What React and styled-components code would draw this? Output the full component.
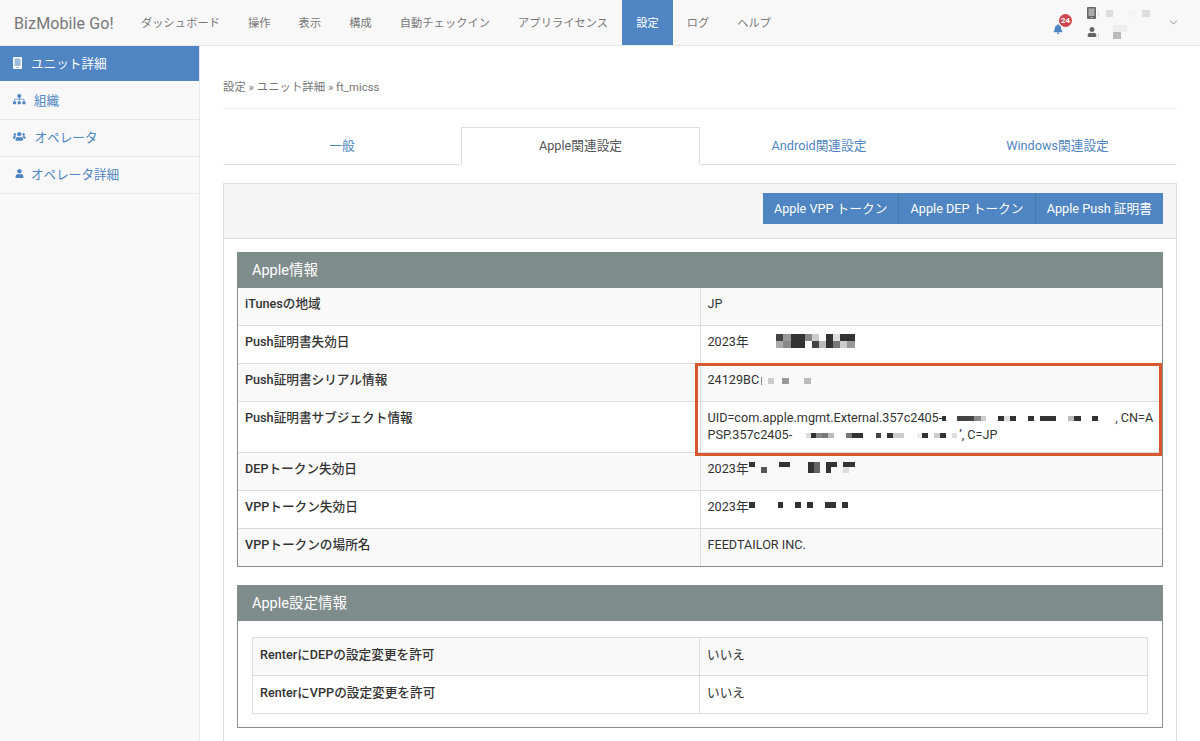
import styled, { createGlobalStyle } from "styled-components";
import { FaBell, FaSitemap, FaUser, FaUsers } from "react-icons/fa";
import { ChevronDown } from "lucide-react";

const Global = createGlobalStyle`
  html, body { margin: 0; padding: 0; background: #fff; }
  body {
    font-family: Roboto, "Noto Sans CJK JP", "Liberation Sans", sans-serif;
    font-size: 13px;
    color: #333;
  }
  * { box-sizing: border-box; }
`;

const Page = styled.div`
  width: 1200px;
  height: 741px;
  overflow: hidden;
  display: flex;
  flex-direction: column;
`;

const Navbar = styled.header`
  height: 46px;
  flex: none;
  display: flex;
  align-items: stretch;
  background: #f8f8f8;
  border-bottom: 1px solid #e7e7e7;
`;

const Brand = styled.div`
  width: 127px;
  padding-left: 14px;
  font-size: 16px;
  line-height: 47px;
  color: #777;
  letter-spacing: 0.12px;
`;

const NavItem = styled.div`
  padding: 0 14px;
  line-height: 47px;
  font-size: 11.2px;
  letter-spacing: 0.1px;
  color: ${(p) => (p.$active ? "#fff" : "#777")};
  background: ${(p) => (p.$active ? "#4f85c2" : "transparent")};
`;

const NavRight = styled.div`
  margin-left: auto;
  display: flex;
  align-items: center;
  padding-right: 20px;
`;

const Bell = styled.div`
  position: relative;
  width: 34px;
  height: 20px;
  margin-top: 3px;
  color: #4f85c2;
  display: flex;
  align-items: flex-end;
`;

const Badge = styled.span`
  position: absolute;
  left: 6px;
  top: 0;
  width: 13px;
  height: 13px;
  border-radius: 50%;
  background: #d0454f;
  color: #fff;
  font-size: 8px;
  font-weight: 700;
  line-height: 13px;
  text-align: center;
`;

const UserBox = styled.div`
  width: 80px;
  display: flex;
  flex-direction: column;
  gap: 5px;
  color: #666;
`;

const UserRow = styled.div`
  display: flex;
  align-items: center;
  height: ${(p) => p.$h}px;
`;

const Body = styled.div`
  flex: 1;
  display: flex;
  min-height: 0;
`;

const Sidebar = styled.aside`
  width: 200px;
  flex: none;
  background: #f8f8f8;
  border-right: 1px solid #e7e7e7;
`;

const SideItem = styled.div`
  height: ${(p) => (p.$active ? "35px" : "37px")};
  margin-bottom: ${(p) => (p.$active ? "2px" : "0")};
  display: flex;
  align-items: center;
  gap: ${(p) => p.$gap}px;
  padding: 0 0 ${(p) => (p.$active ? "2px" : "4px")} ${(p) => p.$pad || 13}px;
  font-size: 12.6px;
  color: ${(p) => (p.$active ? "#fff" : "#4f85c2")};
  background: ${(p) => (p.$active ? "#4f85c2" : "transparent")};
  border-bottom: ${(p) => (p.$active ? "none" : "1px solid #e7e7e7")};
  svg { flex: none; }
`;

const Main = styled.main`
  flex: 1;
  padding: 0 23px;
  min-width: 0;
`;

const Breadcrumb = styled.div`
  height: 63px;
  padding-top: 34px;
  line-height: 15px;
  font-size: 11.4px;
  color: #777;
  border-bottom: 1px solid #eee;
`;

const Tabs = styled.nav`
  margin-top: 18px;
  height: 38px;
  display: grid;
  grid-template-columns: 238px 239px 238px 239px;
`;

const Tab = styled.div`
  text-align: center;
  font-size: 12.7px;
  line-height: 36px;
  color: ${(p) => (p.$active ? "#555" : "#4f85c2")};
  border: 1px solid ${(p) => (p.$active ? "#ddd" : "transparent")};
  border-bottom: 1px solid ${(p) => (p.$active ? "#fff" : "#ddd")};
`;

const Panel = styled.section`
  margin-top: 18px;
  border: 1px solid #ddd;
  border-bottom: none;
  padding-bottom: 14px;
`;

const PanelTools = styled.div`
  height: 55px;
  display: flex;
  justify-content: flex-end;
  align-items: flex-start;
  padding: 9px 13px 0 0;
  background: #f5f5f5;
  border-bottom: 1px solid #ddd;
`;

const ToolButton = styled.button`
  height: 31px;
  padding: 0 11.1px 2px;
  font: inherit;
  font-size: 12.7px;
  color: #fff;
  background: #4f85c2;
  border: none;
  border-left: 1px solid #4577b0;
  white-space: nowrap;
  &:first-child { border-left: none; }
`;

const Section = styled.div`
  margin: ${(p) => (p.$first ? "13px" : "18px")} 13px 0 13px;
  border: 1px solid #888f8f;
  border-top: none;
  position: relative;
`;

const SectionTitle = styled.h3`
  margin: 0 -1px;
  height: 36px;
  padding-left: 15px;
  font-size: 14.5px;
  font-weight: 400;
  line-height: 37px;
  color: #fff;
  background: #7f8c8c;
`;

const Table = styled.table`
  width: 100%;
  border-collapse: collapse;
  table-layout: fixed;
  font-size: 12.65px;
`;

const Row = styled.tr`
  height: ${(p) => p.$h || 38}px;
  background: ${(p) => (p.$odd ? "#f9f9f9" : "#fff")};
  & + & { border-top: 1px solid #ddd; }
`;

const Th = styled.th`
  width: ${(p) => p.$w}px;
  padding: 7px 7px 9px;
  vertical-align: top;
  text-align: left;
  font-weight: 500;
  line-height: 17px;
  border-right: 1px solid #ddd;
`;

const Td = styled.td`
  padding: 7px 7px 9px;
  vertical-align: top;
  line-height: 17px;
  color: #333;
`;

const Nowrap = styled.div`
  white-space: nowrap;
  overflow: hidden;
`;

const SettingsBody = styled.div`
  padding: 16px 14px 13px;
`;

const BorderedTable = styled(Table)`
  border: 1px solid #ddd;
  th, td { padding-top: 8px; padding-bottom: 8px; }
`;

const Highlight = styled.div`
  position: absolute;
  left: 457px;
  top: 111px;
  width: 467px;
  height: 93px;
  border: 3px solid #d65a2e;
  pointer-events: none;
`;

const MosaicSvg = styled.svg`
  display: inline-block;
  flex: none;
  vertical-align: ${(p) => p.$drop || 0}px;
  margin-left: ${(p) => p.$left || 0}px;
  margin-right: ${(p) => p.$right || 0}px;
`;

// blurred out values: [x, y, w, h, colour]
const Mosaic = ({ w, h, cells, left, right, drop }) => (
  <MosaicSvg width={w} height={h} viewBox={`0 0 ${w} ${h}`} $left={left} $right={right} $drop={drop}>
    {cells.map(([x, y, cw, ch, c], i) => (
      <rect key={i} x={x} y={y} width={cw} height={ch} fill={c} />
    ))}
  </MosaicSvg>
);

const TabletIcon = ({ screen }) => (
  <svg width="9" height="12" viewBox="0 0 9 12">
    <rect width="9" height="12" rx="1" fill="currentColor" />
    <rect x="1.5" y="1.5" width="6" height="7.5" fill={screen} />
    <rect x="3" y="10" width="3" height="1" fill={screen} />
  </svg>
);

const dateCells = [
  [0, 0, 7, 7, "#444"], [7, 0, 8, 7, "#999"], [15, 0, 14, 14, "#333"], [29, 0, 7, 7, "#888"],
  [36, 0, 7, 7, "#ccc"], [50, 0, 7, 14, "#333"], [57, 0, 7, 7, "#ddd"], [64, 0, 15, 7, "#333"],
  [0, 7, 7, 7, "#aaa"], [7, 7, 8, 7, "#888"], [36, 7, 7, 7, "#444"], [43, 7, 7, 7, "#bbb"],
  [57, 7, 7, 7, "#777"], [64, 7, 7, 7, "#ccc"], [71, 7, 8, 7, "#999"],
];

const serialCells = [
  [2, 0, 1, 8, "#888"], [9, 1, 6, 6, "#ccc"], [23, 1, 7, 6, "#999"], [45, 1, 7, 6, "#bbb"],
];

const subjectCells1 = [
  [0, 0, 4, 5, "#333"], [15, 0, 17, 5, "#444"], [32, 0, 7, 5, "#888"], [39, 0, 5, 5, "#ccc"],
  [56, 0, 6, 5, "#333"], [62, 0, 6, 5, "#ddd"], [68, 0, 6, 5, "#333"], [86, 0, 6, 5, "#333"],
  [98, 0, 16, 5, "#333"], [126, 0, 6, 5, "#bbb"], [132, 0, 7, 5, "#333"], [150, 0, 6, 5, "#333"],
];

const subjectCells2 = [
  [0, 0, 5, 5, "#ddd"], [5, 0, 5, 5, "#333"], [10, 0, 6, 5, "#888"], [16, 0, 6, 5, "#777"],
  [22, 0, 6, 5, "#bbb"], [40, 0, 6, 5, "#777"], [46, 0, 11, 5, "#333"], [70, 0, 5, 5, "#444"],
  [81, 0, 6, 5, "#333"], [87, 0, 11, 5, "#ccc"], [111, 0, 5, 5, "#eee"], [116, 0, 6, 5, "#333"],
  [128, 0, 6, 5, "#ccc"], [134, 0, 6, 5, "#333"], [146, 0, 5, 5, "#ddd"],
];

const depCells = [
  [0, 0, 6, 5, "#333"], [12, 5, 6, 6, "#555"], [30, 0, 11, 5, "#333"], [59, 0, 6, 11, "#333"],
  [65, 0, 6, 11, "#666"], [77, 0, 11, 5, "#333"], [77, 5, 5, 6, "#333"], [94, 0, 12, 5, "#333"],
  [94, 5, 6, 6, "#ddd"],
];

const vppCells = [
  [0, 0, 6, 6, "#333"], [29, 0, 5, 6, "#333"], [46, 0, 6, 6, "#333"], [58, 0, 6, 6, "#333"],
  [76, 0, 11, 6, "#333"], [93, 0, 6, 6, "#333"],
];

const navItems = ["ダッシュボード", "操作", "表示", "構成", "自動チェックイン", "アプリライセンス"];

const Header = () => (
  <Navbar>
    <Brand>BizMobile Go!</Brand>
    {navItems.map((n) => (
      <NavItem key={n}>{n}</NavItem>
    ))}
    <NavItem $active>設定</NavItem>
    <NavItem>ログ</NavItem>
    <NavItem>ヘルプ</NavItem>
    <NavRight>
      <Bell>
        <FaBell size={10} />
        <Badge>24</Badge>
      </Bell>
      <UserBox>
        <UserRow $h={13}>
          <TabletIcon screen="#aaa" />
          <Mosaic
            w={52}
            h={9}
            left={2}
            cells={[[0, 2, 1, 6, "#ddd"], [8, 1, 7, 7, "#ddd"], [30, 1, 7, 7, "#f4f4f4"], [44, 1, 8, 7, "#ddd"]]}
          />
        </UserRow>
        <UserRow $h={14}>
          <FaUser size={10} />
          <Mosaic
            w={29}
            h={14}
            left={1}
            cells={[[0, 8, 1, 6, "#ddd"], [15, 0, 14, 7, "#eee"], [15, 7, 8, 7, "#bbb"]]}
          />
        </UserRow>
      </UserBox>
      <ChevronDown size={13} strokeWidth={1.5} color="#777" />
    </NavRight>
  </Navbar>
);

const Nav = () => (
  <Sidebar>
    <SideItem $active $gap={9}>
      <TabletIcon screen="#9dbbdd" />
      ユニット詳細
    </SideItem>
    <SideItem $gap={8.5}>
      <FaSitemap size={12.5} />
      組織
    </SideItem>
    <SideItem $gap={9}>
      <FaUsers size={12.5} />
      オペレータ
    </SideItem>
    <SideItem $gap={7.5} $pad={14.5}>
      <FaUser size={9} />
      オペレータ詳細
    </SideItem>
  </Sidebar>
);

export default function App() {
  return (
    <Page>
      <Global />
      <Header />
      <Body>
        <Nav />
        <Main>
          <Breadcrumb>設定 » ユニット詳細 » ft_micss</Breadcrumb>
          <Tabs>
            <Tab>一般</Tab>
            <Tab $active>Apple関連設定</Tab>
            <Tab>Android関連設定</Tab>
            <Tab>Windows関連設定</Tab>
          </Tabs>
          <Panel>
            <PanelTools>
              <ToolButton>Apple VPP トークン</ToolButton>
              <ToolButton>Apple DEP トークン</ToolButton>
              <ToolButton>Apple Push 証明書</ToolButton>
            </PanelTools>
            <Section $first>
              <SectionTitle>Apple情報</SectionTitle>
              <Table>
                <tbody>
                  <Row $odd $h={37}>
                    <Th $w={462}>iTunesの地域</Th>
                    <Td>JP</Td>
                  </Row>
                  <Row>
                    <Th>Push証明書失効日</Th>
                    <Td>
                      2023年
                      <Mosaic w={79} h={14} left={27} drop={-2} cells={dateCells} />
                    </Td>
                  </Row>
                  <Row $odd>
                    <Th>Push証明書シリアル情報</Th>
                    <Td>
                      24129BC
                      <Mosaic w={52} h={8} drop={-1} cells={serialCells} />
                    </Td>
                  </Row>
                  <Row $h={51}>
                    <Th>Push証明書サブジェクト情報</Th>
                    <Td>
                      <Nowrap>
                        UID=com.apple.mgmt.External.357c2405-
                        <Mosaic w={156} h={5} drop={1} right={17} cells={subjectCells1} />
                        , CN=A
                      </Nowrap>
                      <Nowrap>
                        PSP.357c2405-
                        <Mosaic w={151} h={5} left={14} right={2} drop={1} cells={subjectCells2} />
                        ’, C=JP
                      </Nowrap>
                    </Td>
                  </Row>
                  <Row $odd>
                    <Th>DEPトークン失効日</Th>
                    <Td>
                      2023年
                      <Mosaic w={106} h={11} cells={depCells} />
                    </Td>
                  </Row>
                  <Row>
                    <Th>VPPトークン失効日</Th>
                    <Td>
                      2023年
                      <Mosaic w={99} h={6} drop={3} cells={vppCells} />
                    </Td>
                  </Row>
                  <Row $odd>
                    <Th>VPPトークンの場所名</Th>
                    <Td>FEEDTAILOR INC.</Td>
                  </Row>
                </tbody>
              </Table>
              <Highlight />
            </Section>
            <Section>
              <SectionTitle>Apple設定情報</SectionTitle>
              <SettingsBody>
                <BorderedTable>
                  <tbody>
                    <Row $odd>
                      <Th $w={447}>RenterにDEPの設定変更を許可</Th>
                      <Td>いいえ</Td>
                    </Row>
                    <Row>
                      <Th>RenterにVPPの設定変更を許可</Th>
                      <Td>いいえ</Td>
                    </Row>
                  </tbody>
                </BorderedTable>
              </SettingsBody>
            </Section>
          </Panel>
        </Main>
      </Body>
    </Page>
  );
}
